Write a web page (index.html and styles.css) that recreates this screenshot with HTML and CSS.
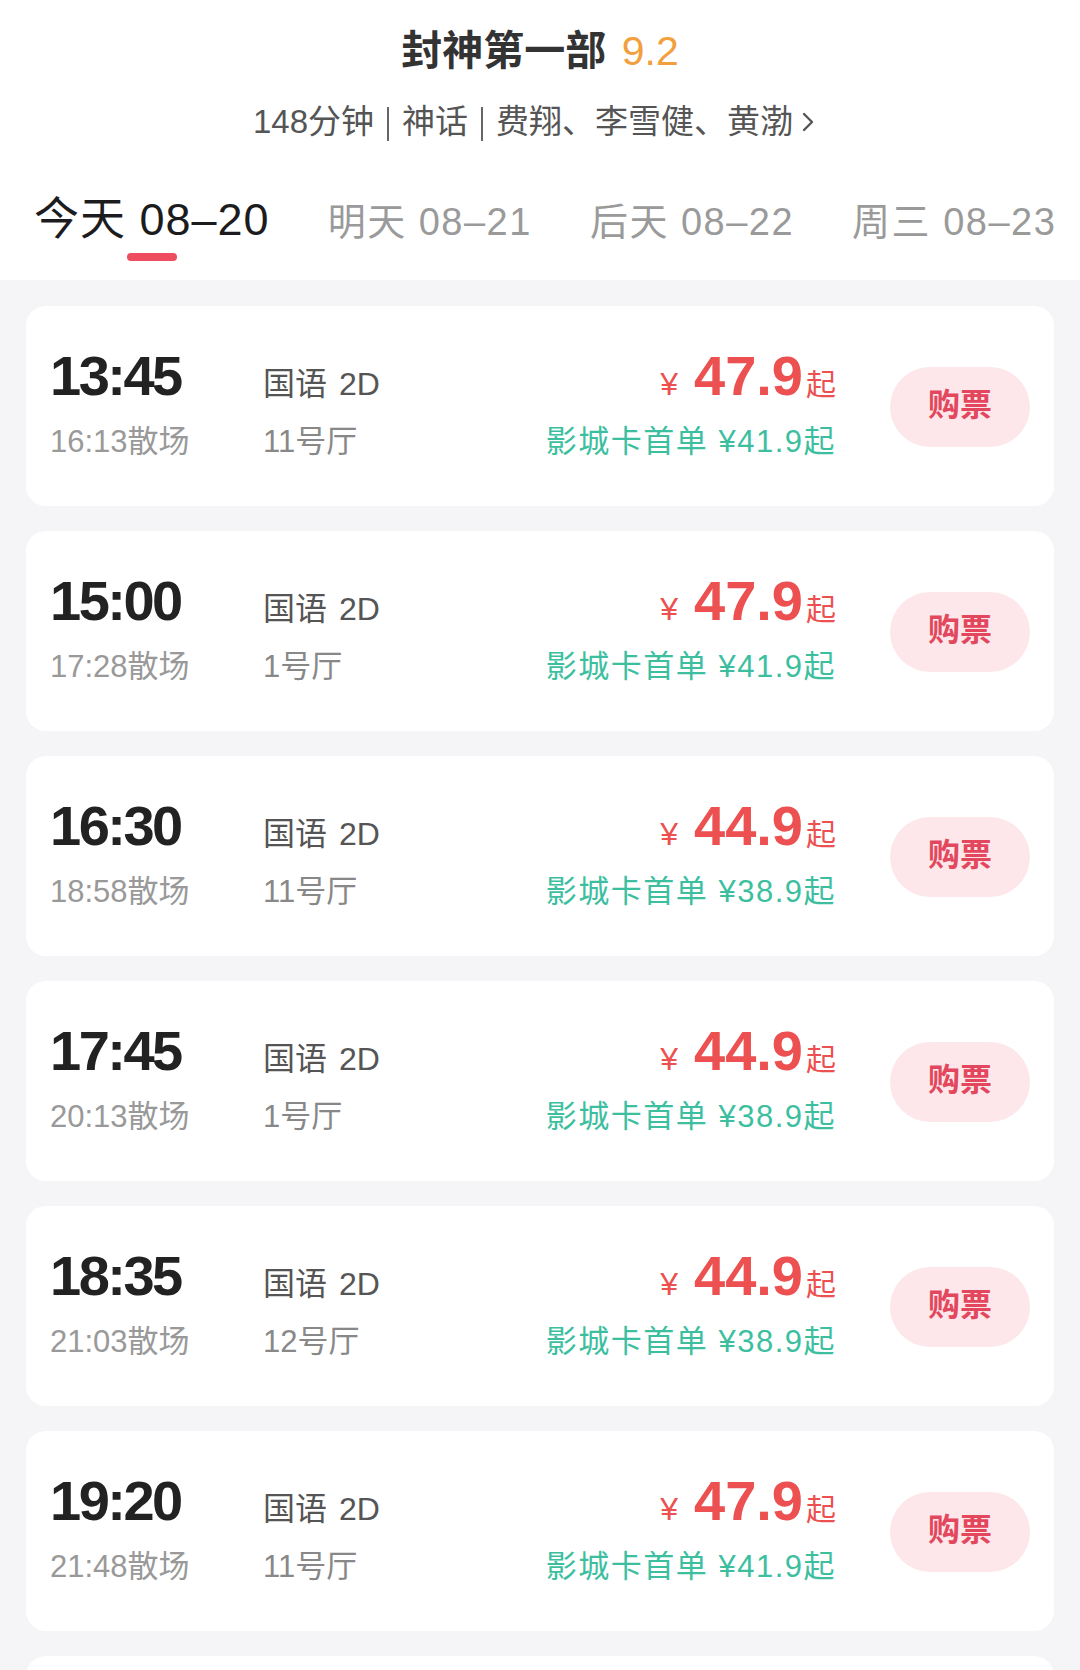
FILE: index.html
```html
<!DOCTYPE html>
<html lang="zh-CN">
<head>
    <meta charset="UTF-8">
    <meta name="viewport" content="width=device-width, initial-scale=1.0">
    <title>封神第一部 - 排片</title>
    <link rel="stylesheet" href="styles.css">
</head>
<body>
    <div class="header">
        <div class="title">封神第一部 <span class="score">9.2</span></div>
        <div class="meta">
            <span>148分钟</span><span class="sep"></span><span>神话</span><span class="sep"></span><span>费翔、李雪健、黄渤</span>
            <svg class="arrow" width="14" height="22" viewBox="0 0 14 22"><polyline points="3,3 11,11 3,19" fill="none" stroke="#555" stroke-width="2.4" stroke-linecap="round" stroke-linejoin="round"/></svg>
        </div>
        <div class="tabs">
            <div class="tab active"><span>今天 08–20</span><i class="bar"></i></div>
            <div class="tab"><span>明天 08–21</span></div>
            <div class="tab"><span>后天 08–22</span></div>
            <div class="tab"><span>周三 08–23</span></div>
        </div>
    </div>

    <div class="list">
        <div class="show">
            <div class="time">13:45</div>
            <div class="lang">国语 2D</div>
            <div class="price"><span class="yen">¥</span><span class="num">47.9</span><span class="qi">起</span></div>
            <div class="end">16:13散场</div>
            <div class="hall">11号厅</div>
            <div class="promo">影城卡首单 ¥41.9起</div>
            <button class="buy">购票</button>
        </div>
        <div class="show">
            <div class="time">15:00</div>
            <div class="lang">国语 2D</div>
            <div class="price"><span class="yen">¥</span><span class="num">47.9</span><span class="qi">起</span></div>
            <div class="end">17:28散场</div>
            <div class="hall">1号厅</div>
            <div class="promo">影城卡首单 ¥41.9起</div>
            <button class="buy">购票</button>
        </div>
        <div class="show">
            <div class="time">16:30</div>
            <div class="lang">国语 2D</div>
            <div class="price"><span class="yen">¥</span><span class="num">44.9</span><span class="qi">起</span></div>
            <div class="end">18:58散场</div>
            <div class="hall">11号厅</div>
            <div class="promo">影城卡首单 ¥38.9起</div>
            <button class="buy">购票</button>
        </div>
        <div class="show">
            <div class="time">17:45</div>
            <div class="lang">国语 2D</div>
            <div class="price"><span class="yen">¥</span><span class="num">44.9</span><span class="qi">起</span></div>
            <div class="end">20:13散场</div>
            <div class="hall">1号厅</div>
            <div class="promo">影城卡首单 ¥38.9起</div>
            <button class="buy">购票</button>
        </div>
        <div class="show">
            <div class="time">18:35</div>
            <div class="lang">国语 2D</div>
            <div class="price"><span class="yen">¥</span><span class="num">44.9</span><span class="qi">起</span></div>
            <div class="end">21:03散场</div>
            <div class="hall">12号厅</div>
            <div class="promo">影城卡首单 ¥38.9起</div>
            <button class="buy">购票</button>
        </div>
        <div class="show">
            <div class="time">19:20</div>
            <div class="lang">国语 2D</div>
            <div class="price"><span class="yen">¥</span><span class="num">47.9</span><span class="qi">起</span></div>
            <div class="end">21:48散场</div>
            <div class="hall">11号厅</div>
            <div class="promo">影城卡首单 ¥41.9起</div>
            <button class="buy">购票</button>
        </div>
        <!-- next show, only its top edge shows in the viewport -->
        <div class="show"></div>
    </div>
</body>
</html>
```

FILE: styles.css
```css
body {
    margin: 0;
    font-family: "Liberation Sans", "Noto Sans CJK SC", sans-serif;
    background: #f5f5f7;
    color: #333;
}
.header {
    background: #fff;
    padding: 23px 0 19px;
}
.title {
    text-align: center;
    font-size: 41px;
    line-height: 56px;
    font-weight: 600;
    color: #333;
}
.title .score {
    color: #f2a03d;
    font-weight: 400;
    margin-left: 4px;
}
.meta {
    margin-top: 21px;
    padding-right: 12px;
    display: flex;
    justify-content: center;
    align-items: center;
    font-size: 33px;
    line-height: 44px;
    color: #555;
}
.sep {
    display: inline-block;
    width: 2px;
    height: 34px;
    margin: 4px 13px 0;
    background: #666;
}
.arrow {
    margin-left: 8px;
}
.tabs {
    display: flex;
    align-items: baseline;
    gap: 58px;
    margin-top: 48px;
    padding-left: 34px;
    white-space: nowrap;
}
.tab {
    display: flex;
    flex-direction: column;
    align-items: center;
    font-size: 38px;
    line-height: 56px;
    letter-spacing: 1.5px;
    color: #9a9a9a;
}
.tab.active {
    font-size: 45px;
    letter-spacing: 1px;
    color: #1c1c1e;
}
.tab .bar {
    display: block;
    width: 50px;
    height: 8px;
    margin-top: 5px;
    border-radius: 4px;
    background: #ee4d5f;
}
.list {
    display: flex;
    flex-direction: column;
    gap: 25px;
    padding: 26px;
}
.show {
    box-sizing: border-box;
    height: 200px;
    padding: 0 24px 5px;
    background: #fff;
    border-radius: 20px;
    display: grid;
    grid-template-columns: 213px 1fr auto 194px;
    grid-template-rows: 60px 40px;
    row-gap: 16px;
    align-content: center;
    align-items: baseline;
}
.time {
    font-size: 56px;
    line-height: 60px;
    font-weight: 700;
    letter-spacing: -2.5px;
    color: #222;
}
.lang {
    font-size: 32px;
    word-spacing: 3px;
    color: #555;
}
.price {
    justify-self: end;
    white-space: nowrap;
    font-size: 56px;
    line-height: 60px;
    color: #ec5050;
}
.price .yen {
    font-size: 32px;
    line-height: 1;
    margin-right: 16px;
}
.price .num {
    font-weight: 700;
}
.price .qi {
    font-size: 30px;
    line-height: 1;
    margin-left: 3px;
}
.end {
    font-size: 31px;
    line-height: 40px;
    color: #999;
}
.hall {
    font-size: 31px;
    line-height: 40px;
    color: #888;
}
.promo {
    justify-self: end;
    white-space: nowrap;
    font-size: 31px;
    line-height: 40px;
    letter-spacing: 1.5px;
    color: #3dbf9f;
}
.buy {
    grid-column: 4;
    grid-row: 1 / 3;
    align-self: center;
    justify-self: end;
    width: 140px;
    height: 80px;
    margin-top: 6px;
    padding: 0 0 10px;
    border: none;
    border-radius: 40px;
    background: #fde7ea;
    color: #e3475e;
    font-family: inherit;
    font-size: 32px;
    font-weight: 700;
    cursor: pointer;
}
```
